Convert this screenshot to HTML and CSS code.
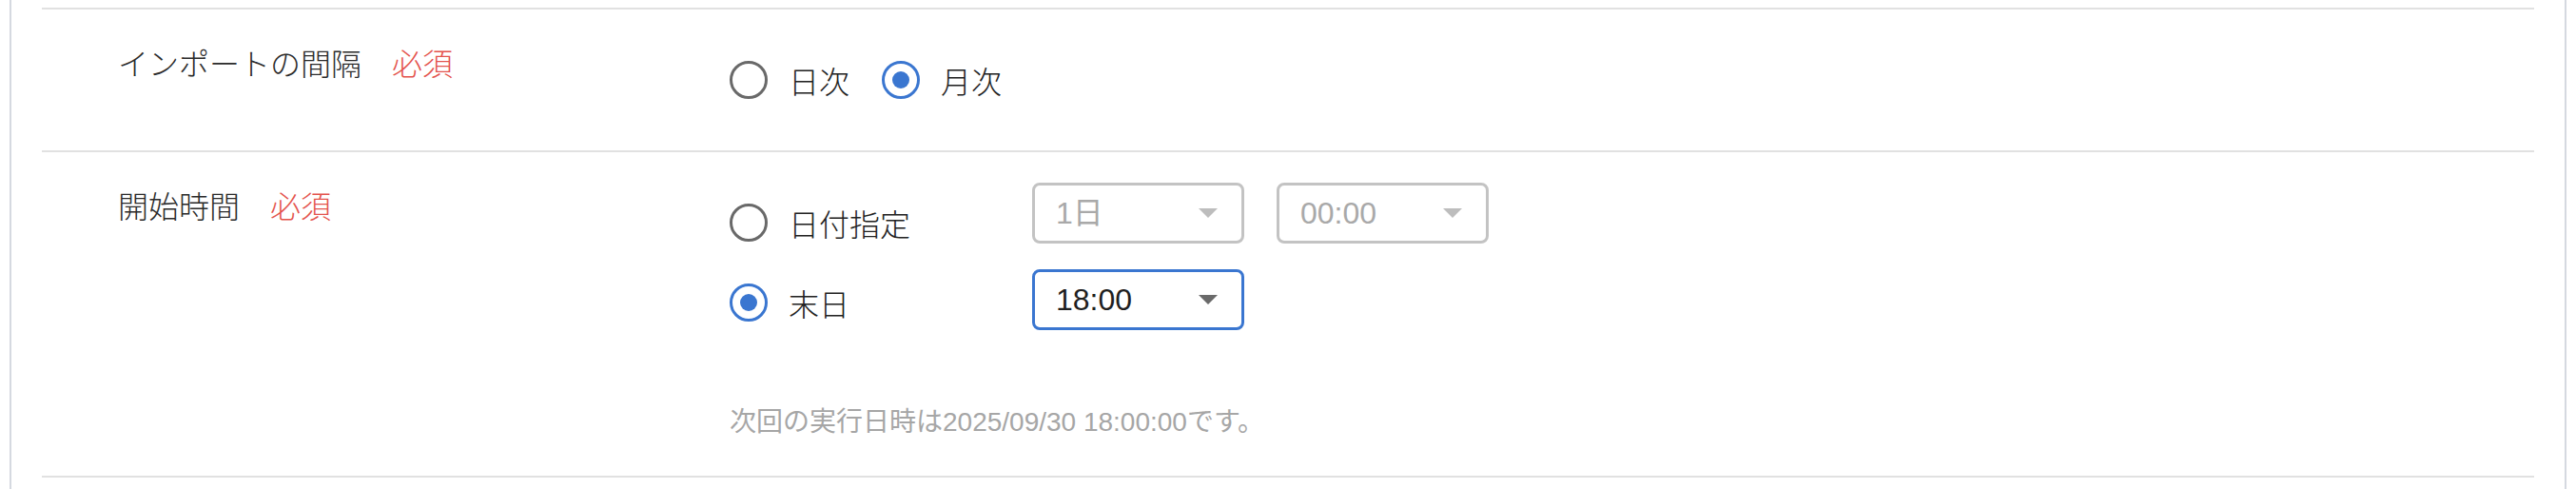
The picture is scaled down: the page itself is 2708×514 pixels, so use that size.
FILE: index.html
```html
<!DOCTYPE html>
<html lang="ja">
<head>
<meta charset="utf-8">
<title>インポート設定</title>
<link rel="stylesheet" href="styles.css">
</head>
<body>
<div class="panel">
  <div class="row row-interval">
    <div class="label">インポートの間隔<span class="req">必須</span></div>
    <div class="control">
      <div class="radio-group">
        <label class="radio"><span class="dot"></span><span class="text">日次</span></label>
        <label class="radio is-checked"><span class="dot"></span><span class="text">月次</span></label>
      </div>
    </div>
  </div>
  <div class="row row-start">
    <div class="label">開始時間<span class="req">必須</span></div>
    <div class="control">
      <div class="option option-date">
        <label class="radio"><span class="dot"></span><span class="text">日付指定</span></label>
        <div class="select is-disabled"><span class="value">1日</span><span class="caret"></span></div>
        <div class="select is-disabled"><span class="value">00:00</span><span class="caret"></span></div>
      </div>
      <div class="option option-last">
        <label class="radio is-checked"><span class="dot"></span><span class="text">末日</span></label>
        <div class="select is-active"><span class="value">18:00</span><span class="caret"></span></div>
      </div>
      <p class="hint">次回の実行日時は2025/09/30 18:00:00です。</p>
    </div>
  </div>
</div>
</body>
</html>
```
FILE: styles.css
```css
html, body {
  margin: 0;
  padding: 0;
  background: #ffffff;
}

body {
  font-family: "Noto Sans CJK JP", "Liberation Sans", sans-serif;
  font-weight: 300;
  color: #2b2b2b;
}

.panel {
  box-sizing: border-box;
  width: 2688px;
  height: 514px;
  margin-left: 10px;
  padding: 8px 32px 0;
  border-left: 2px solid #d5d9e0;
  border-right: 2px solid #d5d9e0;
}

.row {
  display: flex;
  border-top: 2px solid #e1e1e1;
}

.row:last-child {
  border-bottom: 2px solid #e1e1e1;
}

.label {
  box-sizing: border-box;
  flex: 0 0 723px;
  padding: 31px 0 0 80px;
  font-size: 32px;
  line-height: 48px;
  color: #2b2b2b;
}

.req {
  margin-left: 32px;
  color: #e4534d;
}

.control {
  flex: 1 1 auto;
}

.row-interval .control {
  padding: 50px 0;
}

.row-start .control {
  padding: 32px 0 36px;
}

.radio-group {
  display: flex;
}

.radio {
  display: inline-flex;
  align-items: center;
  height: 48px;
  font-size: 32px;
  line-height: 48px;
  color: #222222;
}

.radio-group .radio {
  margin-right: 34px;
}

.dot {
  box-sizing: border-box;
  display: flex;
  align-items: center;
  justify-content: center;
  flex: 0 0 40px;
  width: 40px;
  height: 40px;
  border: 3px solid #696969;
  border-radius: 50%;
}

.radio.is-checked .dot {
  border-color: #3a76d0;
}

.radio.is-checked .dot::after {
  content: "";
  width: 18px;
  height: 18px;
  border-radius: 50%;
  background: #3a76d0;
}

.text {
  margin-left: 22px;
}

.option {
  display: flex;
  align-items: flex-start;
  height: 64px;
}

.option + .option {
  margin-top: 27px;
}

.option .radio {
  flex: 0 0 318px;
}

.option-date .radio {
  margin-top: 18px;
}

.option-last .radio {
  margin-top: 11px;
}

.select {
  box-sizing: border-box;
  display: flex;
  align-items: center;
  justify-content: space-between;
  width: 223px;
  height: 64px;
  padding: 0 25px 0 22px;
  border: 3px solid #c3c3c3;
  border-radius: 8px;
  font-family: "Liberation Sans", "Noto Sans CJK JP", sans-serif;
  font-weight: 400;
  font-size: 32px;
  line-height: 40px;
  color: #a9a9a9;
  background: #ffffff;
}

.select + .select {
  margin-left: 34px;
}

.caret {
  width: 0;
  height: 0;
  border-left: 10px solid transparent;
  border-right: 10px solid transparent;
  border-top: 10px solid #bdbdbd;
}

.select.is-active {
  border-color: #3a76d0;
  color: #1f1f1f;
}

.select.is-active .caret {
  border-top-color: #6a6a6a;
}

.hint {
  margin: 77px 0 0;
  font-family: "Liberation Sans", "Noto Sans CJK JP", sans-serif;
  font-weight: 400;
  font-size: 28px;
  line-height: 40px;
  color: #a6a6a6;
}
```
